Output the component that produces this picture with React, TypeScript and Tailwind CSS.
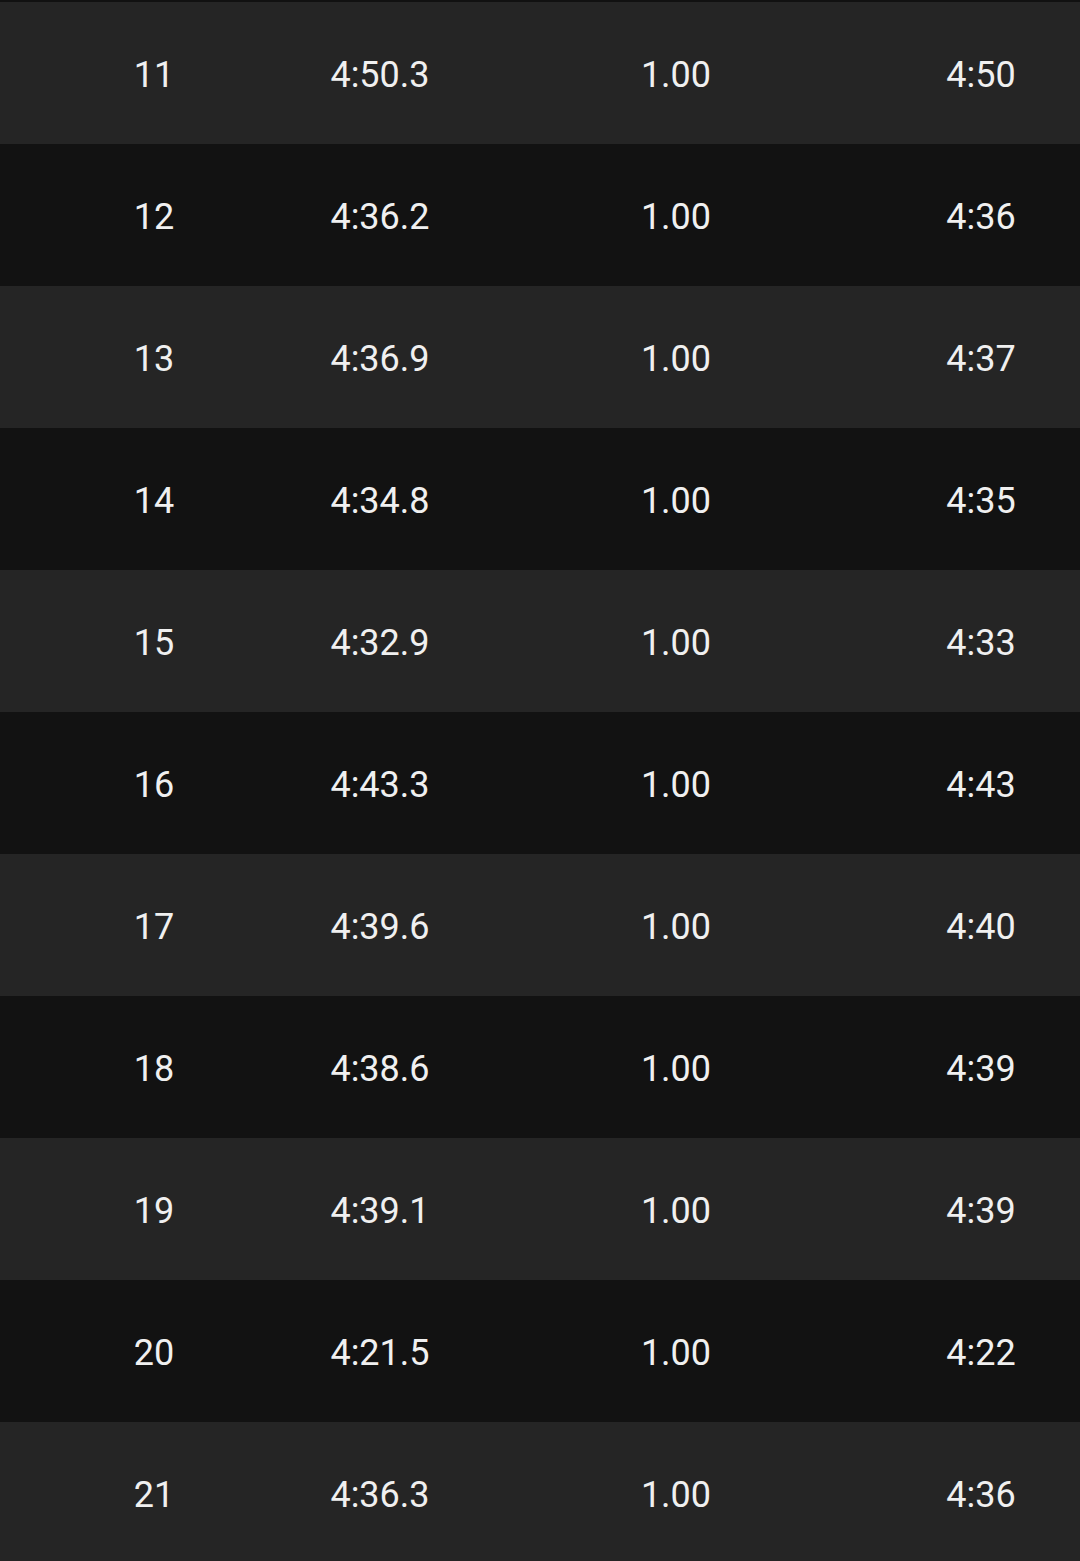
const splits = [
    { lap: 11, time: '4:50.3', dist: '1.00', pace: '4:50' },
    { lap: 12, time: '4:36.2', dist: '1.00', pace: '4:36' },
    { lap: 13, time: '4:36.9', dist: '1.00', pace: '4:37' },
    { lap: 14, time: '4:34.8', dist: '1.00', pace: '4:35' },
    { lap: 15, time: '4:32.9', dist: '1.00', pace: '4:33' },
    { lap: 16, time: '4:43.3', dist: '1.00', pace: '4:43' },
    { lap: 17, time: '4:39.6', dist: '1.00', pace: '4:40' },
    { lap: 18, time: '4:38.6', dist: '1.00', pace: '4:39' },
    { lap: 19, time: '4:39.1', dist: '1.00', pace: '4:39' },
    { lap: 20, time: '4:21.5', dist: '1.00', pace: '4:22' },
    { lap: 21, time: '4:36.3', dist: '1.00', pace: '4:36' },
];

export default function App() {
    return (
        <div className="w-[1080px] h-[1561px] overflow-hidden bg-[#111111] pt-[2px] text-[#f0f0f0] font-['Roboto',sans-serif]">
            {splits.map((s, i) => (
                <div
                    key={s.lap}
                    className={`grid grid-cols-[308px_144px_448px_162px] items-center h-[142px] pt-[4px] text-[36px] ${i % 2 === 0 ? 'bg-[#252525]' : 'bg-[#121212]'}`}
                >
                    <div className="text-center">{s.lap}</div>
                    <div className="text-center">{s.time}</div>
                    <div className="text-center">{s.dist}</div>
                    <div className="text-center">{s.pace}</div>
                </div>
            ))}
        </div>
    );
}
